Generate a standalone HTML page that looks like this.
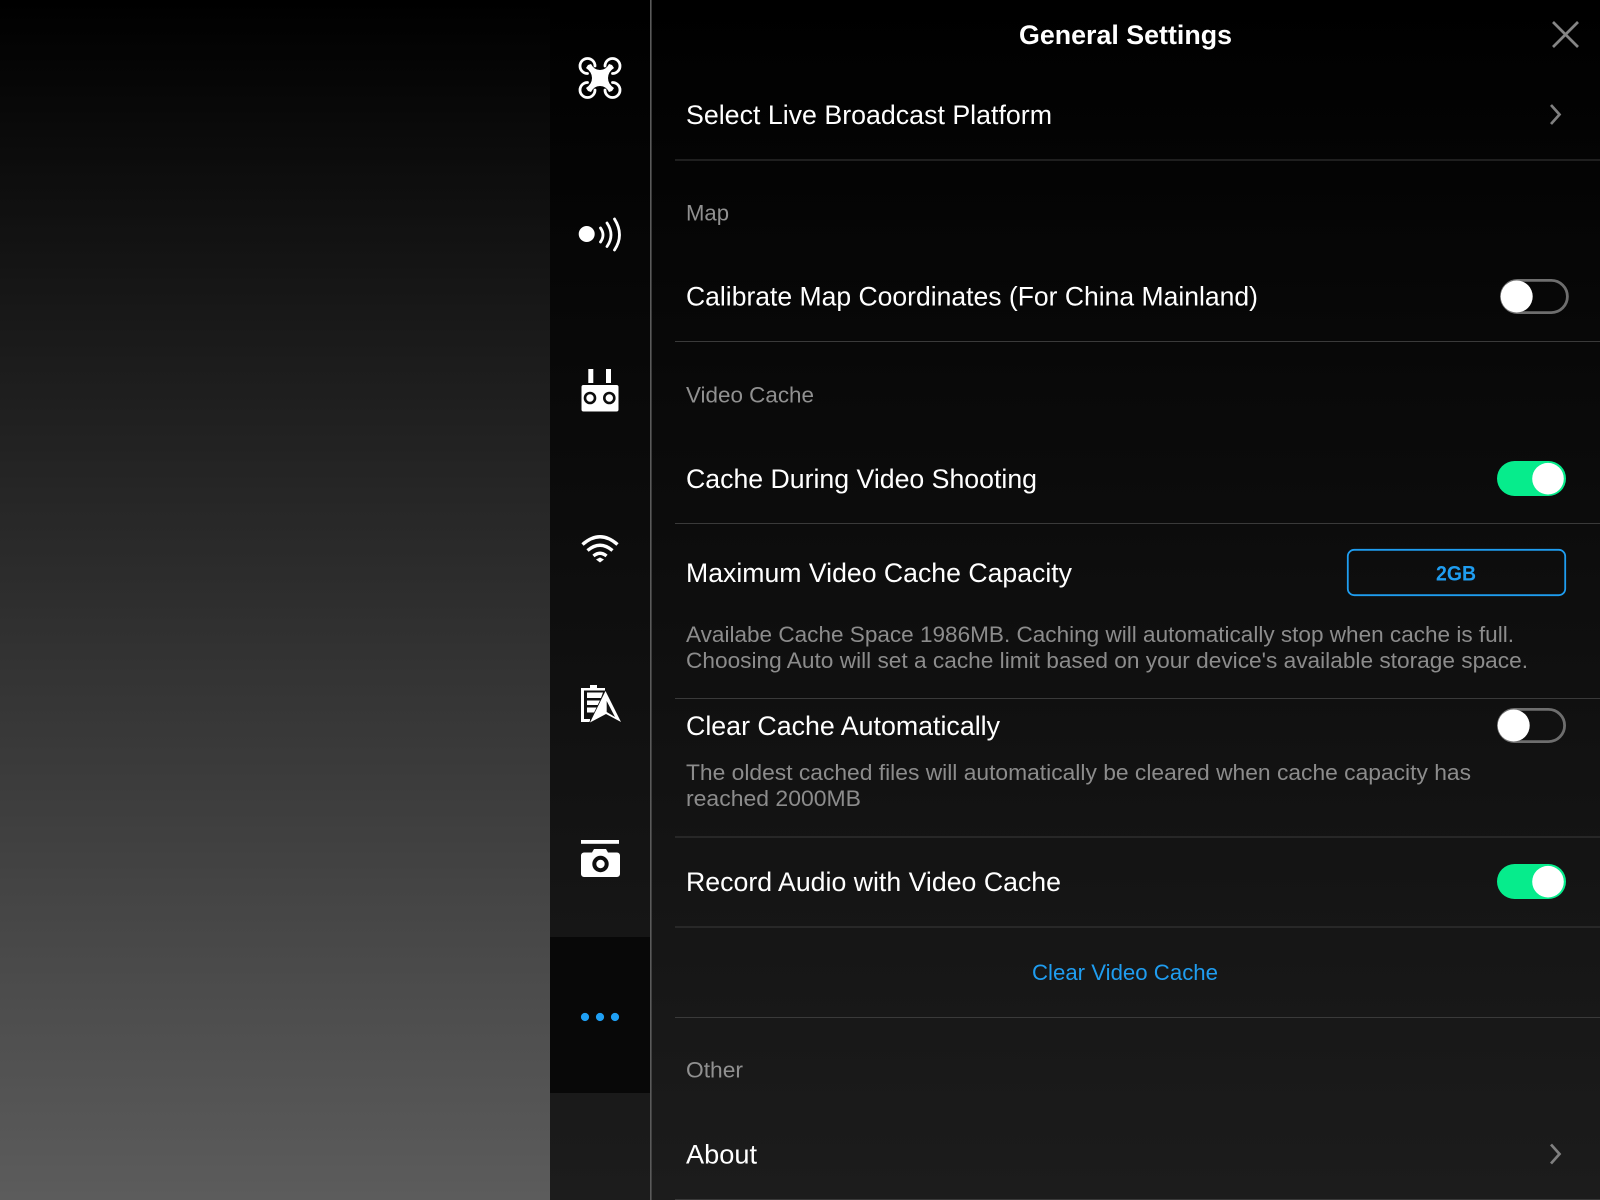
<!DOCTYPE html>
<html><head><meta charset="utf-8"><style>
html,body{margin:0;padding:0;width:1600px;height:1200px;overflow:hidden;background:#000}
svg{display:block}
text{font-family:"Liberation Sans",sans-serif}
.m{font-size:26.5px;fill:#fff}
.g{font-size:22px;fill:#909090}
.d{font-size:22px;fill:#8c8c8c}
</style></head><body>
<svg width="1600" height="1200" viewBox="0 0 1600 1200" xmlns="http://www.w3.org/2000/svg">
<defs>
<linearGradient id="a" x1="0" y1="0" x2="0" y2="1"><stop offset="0" stop-color="#000"/><stop offset="1" stop-color="#5c5c5c"/></linearGradient>
<linearGradient id="b" x1="0" y1="0" x2="0" y2="1"><stop offset="0" stop-color="#000"/><stop offset="1" stop-color="#1c1c1c"/></linearGradient>
</defs>
<rect width="550" height="1200" fill="url(#a)"/>
<rect x="550" width="1050" height="1200" fill="url(#b)"/>
<rect x="550" y="937" width="100" height="156" fill="#080808"/>
<rect x="650" width="1.6" height="1200" fill="#5a5a5a"/>

<!-- separators -->
<g fill="#3a3a3a">
<rect x="675" y="159.5" width="925" height="1"/>
<rect x="675" y="341" width="925" height="1"/>
<rect x="675" y="523" width="925" height="1"/>
<rect x="675" y="698" width="925" height="1"/>
<rect x="675" y="836.5" width="925" height="1"/>
<rect x="675" y="926.5" width="925" height="1"/>
<rect x="675" y="1017" width="925" height="1"/>
<rect x="675" y="1199" width="925" height="1"/>
</g>

<!-- text -->
<text x="1019" y="44" font-size="26.5" font-weight="700" fill="#fff" textLength="213" lengthAdjust="spacingAndGlyphs">General Settings</text>
<text class="m" x="686" y="124" textLength="366" lengthAdjust="spacingAndGlyphs">Select Live Broadcast Platform</text>
<text class="g" x="686" y="220.5" textLength="43" lengthAdjust="spacingAndGlyphs">Map</text>
<text class="m" x="686" y="305.5" textLength="572" lengthAdjust="spacingAndGlyphs">Calibrate Map Coordinates (For China Mainland)</text>
<text class="g" x="686" y="402.5" textLength="128" lengthAdjust="spacingAndGlyphs">Video Cache</text>
<text class="m" x="686" y="488" textLength="351" lengthAdjust="spacingAndGlyphs">Cache During Video Shooting</text>
<text class="m" x="686" y="582" textLength="386" lengthAdjust="spacingAndGlyphs">Maximum Video Cache Capacity</text>
<text class="d" x="686" y="642" textLength="828" lengthAdjust="spacingAndGlyphs">Availabe Cache Space 1986MB. Caching will automatically stop when cache is full.</text>
<text class="d" x="686" y="668" textLength="842" lengthAdjust="spacingAndGlyphs">Choosing Auto will set a cache limit based on your device's available storage space.</text>
<text class="m" x="686" y="735" textLength="314" lengthAdjust="spacingAndGlyphs">Clear Cache Automatically</text>
<text class="d" x="686" y="780" textLength="785" lengthAdjust="spacingAndGlyphs">The oldest cached files will automatically be cleared when cache capacity has</text>
<text class="d" x="686" y="806" textLength="175" lengthAdjust="spacingAndGlyphs">reached 2000MB</text>
<text class="m" x="686" y="891" textLength="375" lengthAdjust="spacingAndGlyphs">Record Audio with Video Cache</text>
<text x="1032" y="980" font-size="22" fill="#1f9df0" textLength="186" lengthAdjust="spacingAndGlyphs">Clear Video Cache</text>
<text class="g" x="686" y="1077.5" textLength="57" lengthAdjust="spacingAndGlyphs">Other</text>
<text class="m" x="686" y="1163.5" textLength="71" lengthAdjust="spacingAndGlyphs">About</text>

<!-- close -->
<path d="M1553 22 L1578 47 M1578 22 L1553 47" stroke="#858585" stroke-width="2.7" fill="none"/>
<!-- chevrons -->
<path d="M1551 105 L1559.5 114.5 L1551 124" stroke="#808080" stroke-width="2.7" fill="none"/>
<path d="M1551 1144.5 L1559.5 1154 L1551 1163.5" stroke="#808080" stroke-width="2.7" fill="none"/>

<!-- toggles -->
<rect x="1501.4" y="280.4" width="66" height="32.2" rx="16.1" fill="none" stroke="#6e6e6e" stroke-width="2.8"/>
<circle cx="1516.7" cy="296.5" r="16" fill="#fff"/>
<rect x="1497" y="461" width="69" height="35" rx="17.5" fill="#06ec8c"/>
<circle cx="1548" cy="478.7" r="15.8" fill="#fff"/>
<rect x="1498.4" y="709.4" width="66.2" height="32.2" rx="16.1" fill="none" stroke="#6e6e6e" stroke-width="2.8"/>
<circle cx="1513.7" cy="725.5" r="16" fill="#fff"/>
<rect x="1497" y="864" width="69" height="35" rx="17.5" fill="#06ec8c"/>
<circle cx="1548" cy="881.7" r="15.8" fill="#fff"/>

<!-- button -->
<rect x="1347.8" y="549.8" width="217.4" height="45.4" rx="6.5" fill="none" stroke="#1f9df0" stroke-width="1.8"/>
<text x="1436" y="580.5" font-size="21" font-weight="700" fill="#1f9df0" textLength="40" lengthAdjust="spacingAndGlyphs">2GB</text>

<!-- drone icon -->
<g fill="none" stroke="#fff" stroke-width="2.8" stroke-linecap="round">
<path d="M595 66 A7.5 7.5 0 1 0 587.5 73.5"/>
<path d="M605 66 A7.5 7.5 0 1 1 612.5 73.5"/>
<path d="M595 90 A7.5 7.5 0 1 1 587.5 82.5"/>
<path d="M605 90 A7.5 7.5 0 1 0 612.5 82.5"/>
</g>
<path d="M588 65 L591 64 Q594 70 600 70 Q606 70 609 64 L612 65 L614 68 Q608 72 608 78 Q608 84 614 88 L612 91 L609 92 Q606 86 600 86 Q594 86 591 92 L588 91 L586 88 Q592 84 592 78 Q592 72 586 68 Z" fill="#fff"/>

<!-- signal icon -->
<circle cx="586.7" cy="234" r="8" fill="#fff"/>
<g fill="none" stroke="#fff" stroke-width="2.8" stroke-linecap="round">
<path d="M600.5 228 Q605.5 235 600.5 242"/>
<path d="M607 223 Q615 235 607 246.5"/>
<path d="M614.5 219 Q624.5 235 614.5 250"/>
</g>

<!-- remote icon -->
<rect x="588.3" y="369" width="5" height="14" fill="#fff"/>
<rect x="606" y="369" width="5" height="14" fill="#fff"/>
<rect x="581.5" y="385" width="37" height="26.5" rx="2" fill="#fff"/>
<circle cx="590" cy="398" r="5" fill="#fff" stroke="#0c0c0c" stroke-width="2.6"/>
<circle cx="609.3" cy="398" r="5" fill="#fff" stroke="#0c0c0c" stroke-width="2.6"/>

<!-- wifi icon -->
<g fill="none" stroke="#fff" stroke-width="3.4">
<path d="M582.5 544.5 Q600 529 617.5 544.5"/>
<path d="M587.5 550.5 Q600 540 612.5 550.5"/>
<path d="M593.5 556 Q600 550.5 606.5 556"/>
</g>
<path d="M596 559.5 L600 557.5 L604 559.5 L600 562.5 Z" fill="#fff"/>

<!-- battery + nav icon -->
<path d="M590 685 H597 V688 H605 V690.5 H584 V719 H590 V722 H581 V688 H590 Z" fill="#fff"/>
<path d="M587 692.5 H603 L601 698 H587 Z M587 700.5 H600 L598 705 H587 Z M587 707.5 H597 L595 712.5 H587 Z" fill="#fff"/>
<path d="M605.5 691 L621 722 L606 714 L590 722.5 Z" fill="#fff" stroke="#111" stroke-width="1.6" paint-order="stroke"/>
<path d="M606.7 701 L615 717 L606.7 712 Z" fill="#111"/>

<!-- camera icon -->
<rect x="581" y="840" width="38" height="3.8" fill="#fff"/>
<path d="M584 852.5 H592 L594 849 H606 L608 852.5 H617 A3 3 0 0 1 620 855.5 V874 A3 3 0 0 1 617 877 H584 A3 3 0 0 1 581 874 V855.5 A3 3 0 0 1 584 852.5 Z" fill="#fff"/>
<circle cx="600.5" cy="864" r="6.2" fill="#fff" stroke="#0e0e0e" stroke-width="4"/>

<!-- dots -->
<circle cx="585" cy="1017" r="4.1" fill="#1fa0f5"/>
<circle cx="600" cy="1017" r="4.1" fill="#1fa0f5"/>
<circle cx="615" cy="1017" r="4.1" fill="#1fa0f5"/>
</svg>
</body></html>
